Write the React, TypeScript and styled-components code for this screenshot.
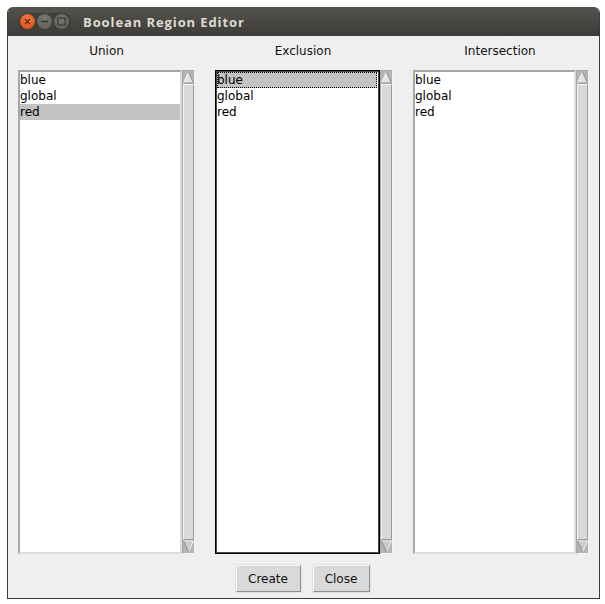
import React from "react";
import styled, { createGlobalStyle } from "styled-components";

const Global = createGlobalStyle`
  html, body { margin: 0; padding: 0; background: #fff; }
  body { width: 605px; height: 604px; overflow: hidden; }
`;

const Page = styled.div`
  padding: 7px 0 0 7px;
  font-family: "DejaVu Sans", sans-serif;
  font-size: 12px;
  color: #111;
`;

const Win = styled.div`
  width: 593px;
  height: 592px;
  box-sizing: border-box;
  display: flex;
  flex-direction: column;
  background: #efefef;
  border: 1px solid #3c3b37;
  border-top: none;
  border-radius: 6px 6px 0 0;
  overflow: hidden;
`;

const TitleBar = styled.div`
  height: 29px;
  flex: none;
  display: flex;
  align-items: center;
  padding-left: 10px;
  background: linear-gradient(#54534e, #3c3b37);
`;

const WinButtons = styled.div`
  display: flex;
  gap: 2px;
  padding: 1px 2px;
  border-radius: 10px;
  background: #3f3e39;
`;

const WinButton = styled.div<{ $close?: boolean }>`
  width: 15px;
  height: 15px;
  border-radius: 50%;
  display: flex;
  align-items: center;
  justify-content: center;
  background: ${(p) =>
    p.$close
      ? "radial-gradient(circle at 50% 35%, #f47a3c, #d9461a)"
      : "radial-gradient(circle at 50% 35%, #777670, #5c5b55)"};
`;

const Title = styled.div`
  margin-left: 12px;
  font-family: "Open Sans", sans-serif;
  font-weight: 700;
  font-size: 13px;
  letter-spacing: 0.9px;
  color: #dfdbd2;
`;

const Body = styled.div`
  flex: 1;
  display: flex;
  flex-direction: column;
  padding: 0 10px;
`;

const Columns = styled.div`
  height: 518px;
  flex: none;
  display: grid;
  grid-template-columns: 177px 178px 176px;
  column-gap: 20px;
`;

const Column = styled.div`
  min-width: 0;
  display: flex;
  flex-direction: column;
`;

const ColumnTitle = styled.div<{ $nudge: number }>`
  height: 34px;
  flex: none;
  padding: 8px ${(p) => p.$nudge}px 0 0;
  box-sizing: border-box;
  line-height: 15px;
  text-align: center;
  font-size: 12px;
`;

const ListRow = styled.div`
  height: 484px;
  display: flex;
`;

const ListBox = styled.div<{ $focus?: boolean }>`
  flex: 1;
  min-width: 0;
  box-sizing: border-box;
  background: #fff;
  ${(p) =>
    p.$focus
      ? `
    padding: 1px 2px 1px 1px;
    border: 1px solid #000;
    box-shadow: inset 0 0 0 1px #4a4a4a;
  `
      : `
    border: 2px solid;
    border-color: #a8a8a8 #dcdcdc #dcdcdc #a8a8a8;
  `}
`;

const Item = styled.div<{ $sel?: boolean; $dotted?: boolean }>`
  height: 16px;
  line-height: 17px;
  font-size: 12px;
  color: #000;
  background: ${(p) => (p.$sel ? "#c3c3c3" : "transparent")};
  outline: ${(p) => (p.$dotted ? "1px dotted #000" : "none")};
  outline-offset: -1px;
  white-space: nowrap;
`;

const Scrollbar = styled.div`
  width: 13px;
  flex: none;
  display: flex;
  flex-direction: column;
  background: #c3c3c3;
  box-sizing: border-box;
  border: 1px solid;
  border-color: #a8a8a8 #f4f4f4 #f4f4f4 #a8a8a8;
`;

const Arrow = styled.div`
  height: 13px;
  flex: none;
  display: flex;
  background: #b4b4b4;
`;

const Thumb = styled.div`
  flex: 1;
  background: #d9d9d9;
  border-left: 1px solid #f4f4f4;
  border-top: 1px solid #f4f4f4;
  border-right: 1px solid #9a9a9a;
  border-bottom: 1px solid #9a9a9a;
`;

const Footer = styled.div`
  flex: 1;
  display: flex;
  justify-content: center;
  gap: 12px;
  padding-top: 11px;
  padding-right: 2px;
`;

const Btn = styled.button<{ $w: number }>`
  width: ${(p) => p.$w}px;
  height: 27px;
  box-sizing: border-box;
  padding: 0;
  font-family: "DejaVu Sans", sans-serif;
  font-size: 12px;
  color: #111;
  background: #d9d9d9;
  border: 1px solid;
  border-color: #f8f8f8 #8f8f8f #8f8f8f #f8f8f8;
  outline: 1px solid #e2e2e2;
`;

const Up = () => (
  <svg width="11" height="13" viewBox="0 0 11 13">
    <polygon points="5.5,1 10.5,12 0.5,12" fill="#e4e4e4" />
    <path d="M5.5 1L0.5 12" stroke="#f8f8f8" strokeWidth="1" fill="none" />
    <path d="M5.5 1L10.5 12H0.5" stroke="#8f8f8f" strokeWidth="1" fill="none" />
  </svg>
);
const Down = () => (
  <svg width="11" height="13" viewBox="0 0 11 13">
    <polygon points="0.5,1 10.5,1 5.5,12" fill="#c9c9c9" />
    <path d="M0.5 1H10.5L5.5 12" stroke="#f0f0f0" strokeWidth="1" fill="none" />
    <path d="M0.5 1L5.5 12" stroke="#8f8f8f" strokeWidth="1" fill="none" />
  </svg>
);

const List = ({
  title,
  selected,
  focus,
  nudge = 0,
}: {
  title: string;
  selected?: number;
  focus?: boolean;
  nudge?: number;
}) => (
  <Column>
    <ColumnTitle $nudge={nudge}>{title}</ColumnTitle>
    <ListRow>
      <ListBox $focus={focus}>
        {["blue", "global", "red"].map((t, i) => (
          <Item key={t} $sel={selected === i} $dotted={focus && selected === i}>
            {t}
          </Item>
        ))}
      </ListBox>
      <Scrollbar>
        <Arrow><Up /></Arrow>
        <Thumb />
        <Arrow><Down /></Arrow>
      </Scrollbar>
    </ListRow>
  </Column>
);

export default function App() {
  return (
    <Page>
      <Global />
      <Win>
        <TitleBar>
          <WinButtons>
            <WinButton $close>
              <svg width="7" height="7" viewBox="0 0 7 7">
                <path d="M1 1L6 6M6 1L1 6" stroke="#5c2410" strokeWidth="1.1" />
              </svg>
            </WinButton>
            <WinButton>
              <svg width="9" height="3" viewBox="0 0 9 3">
                <path d="M1 1.5H8" stroke="#35342f" strokeWidth="1.3" />
              </svg>
            </WinButton>
            <WinButton>
              <svg width="9" height="9" viewBox="0 0 9 9">
                <rect x="1" y="1" width="7" height="7" fill="none" stroke="#35342f" strokeWidth="1.1" />
              </svg>
            </WinButton>
          </WinButtons>
          <Title>Boolean Region Editor</Title>
        </TitleBar>
        <Body>
          <Columns>
            <List title="Union" selected={2} />
            <List title="Exclusion" selected={0} focus nudge={2} />
            <List title="Intersection" nudge={2} />
          </Columns>
          <Footer>
            <Btn $w={65}>Create</Btn>
            <Btn $w={57}>Close</Btn>
          </Footer>
        </Body>
      </Win>
    </Page>
  );
}
